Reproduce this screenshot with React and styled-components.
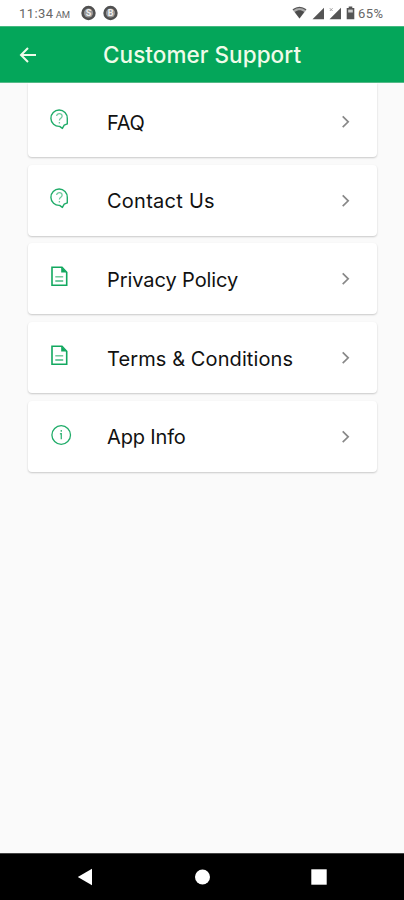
import React from "react";
import styled, { createGlobalStyle } from "styled-components";

const GlobalStyle = createGlobalStyle`
  * {
    box-sizing: border-box;
  }

  body {
    margin: 0;
    background-color: #fafafa;
    font-family: Inter, "Open Sans", sans-serif;
  }
`;

const Screen = styled.div`
  display: flex;
  flex-direction: column;
  width: 404px;
  height: 900px;
  overflow: hidden;
  background-color: #fafafa;
`;

// Status bar
const StatusBar = styled.div`
  display: flex;
  align-items: center;
  flex: 0 0 26px;
  padding: 0 18px 0 19px;
  background-color: #fff;
  color: #666;
  font-family: Roboto, sans-serif;
  font-size: 13px;
`;

const Clock = styled.span`
  width: 62px;
  letter-spacing: 0.45px;
  white-space: nowrap;

  small {
    margin-left: 2px;
    font-size: 9.5px;
    letter-spacing: 0;
  }
`;

const StatusIcons = styled.div`
  display: flex;
  align-items: center;
  margin-left: auto;

  svg {
    display: block;
  }
`;

const Battery = styled.span`
  margin-left: 3px;
  width: 28px;
  letter-spacing: 0.5px;
  white-space: nowrap;
`;

// Header
const Header = styled.header`
  display: flex;
  align-items: center;
  flex: 0 0 57px;
  padding-left: 18px;
  background-color: #04a65a;
  border-top: 1px solid #45b981;
  border-bottom: 1px solid #54ba88;
`;

const Title = styled.h1`
  margin: 0 0 0 65px;
  color: #effbe9;
  font-size: 22.5px;
  font-weight: 500;
  line-height: 28px;
  letter-spacing: 0.05px;
  white-space: nowrap;
`;

// Menu
const Menu = styled.main`
  display: flex;
  flex-direction: column;
  flex: 1;
  gap: 7.7px;
  padding: 0 27px 0 28px;
`;

const Card = styled.div`
  display: flex;
  align-items: center;
  height: 71px;
  padding: 1px 25px 0 22px;
  background-color: #fff;
  border-radius: 4px;
  box-shadow: 0 1px 2px rgba(0, 0, 0, 0.2);

  /* The first card runs up under the header */
  &:first-child {
    height: 74px;
    padding-top: 4px;
    border-radius: 0 0 4px 4px;
  }
`;

const CardIcon = styled.div`
  flex: 0 0 57px;
  height: 26px;

  svg {
    display: block;
  }
`;

const Label = styled.span`
  flex: 1;
  padding-top: 1px;
  color: #111;
  font-size: 20px;
  line-height: 28px;
  letter-spacing: ${(props) => props.spacing}px;
  white-space: nowrap;
`;

// Android navigation
const NavBar = styled.nav`
  display: flex;
  align-items: center;
  justify-content: space-between;
  flex: 0 0 47px;
  padding: 0 77px;
  background-color: #000;
  border-top: 1px solid #444;
`;

const CoinIcon = ({ letter }) => (
  <svg width="22" height="16" viewBox="0 0 22 16">
    <circle cx="7.5" cy="8" r="7.2" fill="#505050" />
    <circle cx="7.5" cy="8" r="4.6" fill="#999" />
    <text x="7.5" y="11.2" textAnchor="middle" fontSize="9" fontWeight="700" fill="#eee">
      {letter}
    </text>
  </svg>
);

const WifiIcon = () => (
  <svg width="20" height="14" viewBox="0 0 20 14">
    <path d="M0.5 3.8C4.5 0.4 10.5 0.4 14.5 3.8L7.5 12.5Z" fill="#aaa" />
    <path d="M2.8 6C5.8 3.8 9.2 3.8 12.2 6L7.5 12.5Z" fill="#4c4c4c" />
    <path d="M1 3.8C5 0.8 10 0.8 14 3.8" fill="none" stroke="#555" strokeWidth="1.4" />
  </svg>
);

const SignalIcon = ({ marked }) => (
  <svg width="17" height="13" viewBox="0 0 17 13">
    <path d="M12 0.8V12.3H0.5Z" fill="#555" />
    {marked && <path d="M0.8 1.2L3.6 4M3.6 1.2L0.8 4" stroke="#999" strokeWidth="0.9" />}
  </svg>
);

const BatteryIcon = () => (
  <svg width="9" height="14" viewBox="0 0 9 14">
    <path d="M2.7 0.5H6.3V2H8.3V13.2H0.7V2H2.7Z" fill="#555" />
    <path d="M2.2 3.6H6.8V6.5H2.2Z" fill="#ccc" />
  </svg>
);

const BackIcon = () => (
  <svg width="20" height="20" viewBox="0 0 20 20">
    <path d="M18 10H3M10 3L3 10L10 17" fill="none" stroke="#effbe9" strokeWidth="2" />
  </svg>
);

const QuestionIcon = () => (
  <svg width="20" height="22" viewBox="0 0 20 22">
    <path
      d="M9.6 17.4A8.2 8.2 0 1 1 17.3 9.5V14.9L14.2 16.2L12.4 19.4Z"
      fill="none"
      stroke="#20ac69"
      strokeWidth="1.4"
      strokeLinejoin="round"
    />
    <path
      d="M6.7 7.1C6.7 3.7 12.3 3.8 12.1 7.3C12 9.2 9.4 9.2 9.4 11.4M9.4 13V14.4"
      fill="none"
      stroke="#6cc99c"
      strokeWidth="1.3"
    />
  </svg>
);

const DocumentIcon = () => (
  <svg width="20" height="22" viewBox="0 0 20 22">
    <path d="M2 1.2H12L16.7 6.2V19.2H2Z" fill="none" stroke="#12a85f" strokeWidth="1.6" />
    <path d="M11.2 1.2V6.5H16.7Z" fill="#12a85f" />
    <path d="M5.3 10.8H13.2" stroke="#67c695" strokeWidth="1.4" />
    <path d="M5.3 15H13.2" stroke="#35b477" strokeWidth="1.4" />
  </svg>
);

const InfoIcon = () => (
  <svg width="22" height="22" viewBox="0 0 22 22">
    <circle cx="11.2" cy="11" r="9.3" fill="none" stroke="#20ac69" strokeWidth="1.3" />
    <path d="M11.3 6V7.8M9.9 9.7H11.3V15.3" fill="none" stroke="#43b981" strokeWidth="1.4" />
  </svg>
);

const ChevronIcon = () => (
  <svg width="12" height="14" viewBox="0 0 12 14">
    <path d="M2.7 1.4L8.2 6.8L2.7 12.2" fill="none" stroke="#888" strokeWidth="1.7" />
  </svg>
);

const items = [
  { label: "FAQ", icon: QuestionIcon, spacing: -0.3 },
  { label: "Contact Us", icon: QuestionIcon, spacing: 0.25 },
  { label: "Privacy Policy", icon: DocumentIcon, spacing: -0.08 },
  { label: "Terms & Conditions", icon: DocumentIcon, spacing: 0.1 },
  { label: "App Info", icon: InfoIcon, spacing: -0.15 },
];

const App = () => {
  return (
    <>
      <GlobalStyle />
      <Screen>
        <StatusBar>
          <Clock>
            11:34<small>AM</small>
          </Clock>
          <CoinIcon letter="S" />
          <CoinIcon letter="B" />
          <StatusIcons>
            <WifiIcon />
            <SignalIcon />
            <SignalIcon marked />
            <BatteryIcon />
            <Battery>65%</Battery>
          </StatusIcons>
        </StatusBar>
        <Header>
          <BackIcon />
          <Title>Customer Support</Title>
        </Header>
        <Menu>
          {items.map(({ label, icon: Icon, spacing }) => (
            <Card key={label}>
              <CardIcon>
                <Icon />
              </CardIcon>
              <Label spacing={spacing}>{label}</Label>
              <ChevronIcon />
            </Card>
          ))}
        </Menu>
        <NavBar>
          <svg width="16" height="18" viewBox="0 0 16 18">
            <path d="M0.8 9L15 0.8V17.2Z" fill="#fff" />
          </svg>
          <svg width="16" height="16" viewBox="0 0 16 16">
            <circle cx="8.5" cy="8" r="7.5" fill="#fff" />
          </svg>
          <svg width="16" height="16" viewBox="0 0 16 16">
            <rect x="0.3" y="0.3" width="15.4" height="15.4" fill="#fff" />
          </svg>
        </NavBar>
      </Screen>
    </>
  );
};

export default App;
